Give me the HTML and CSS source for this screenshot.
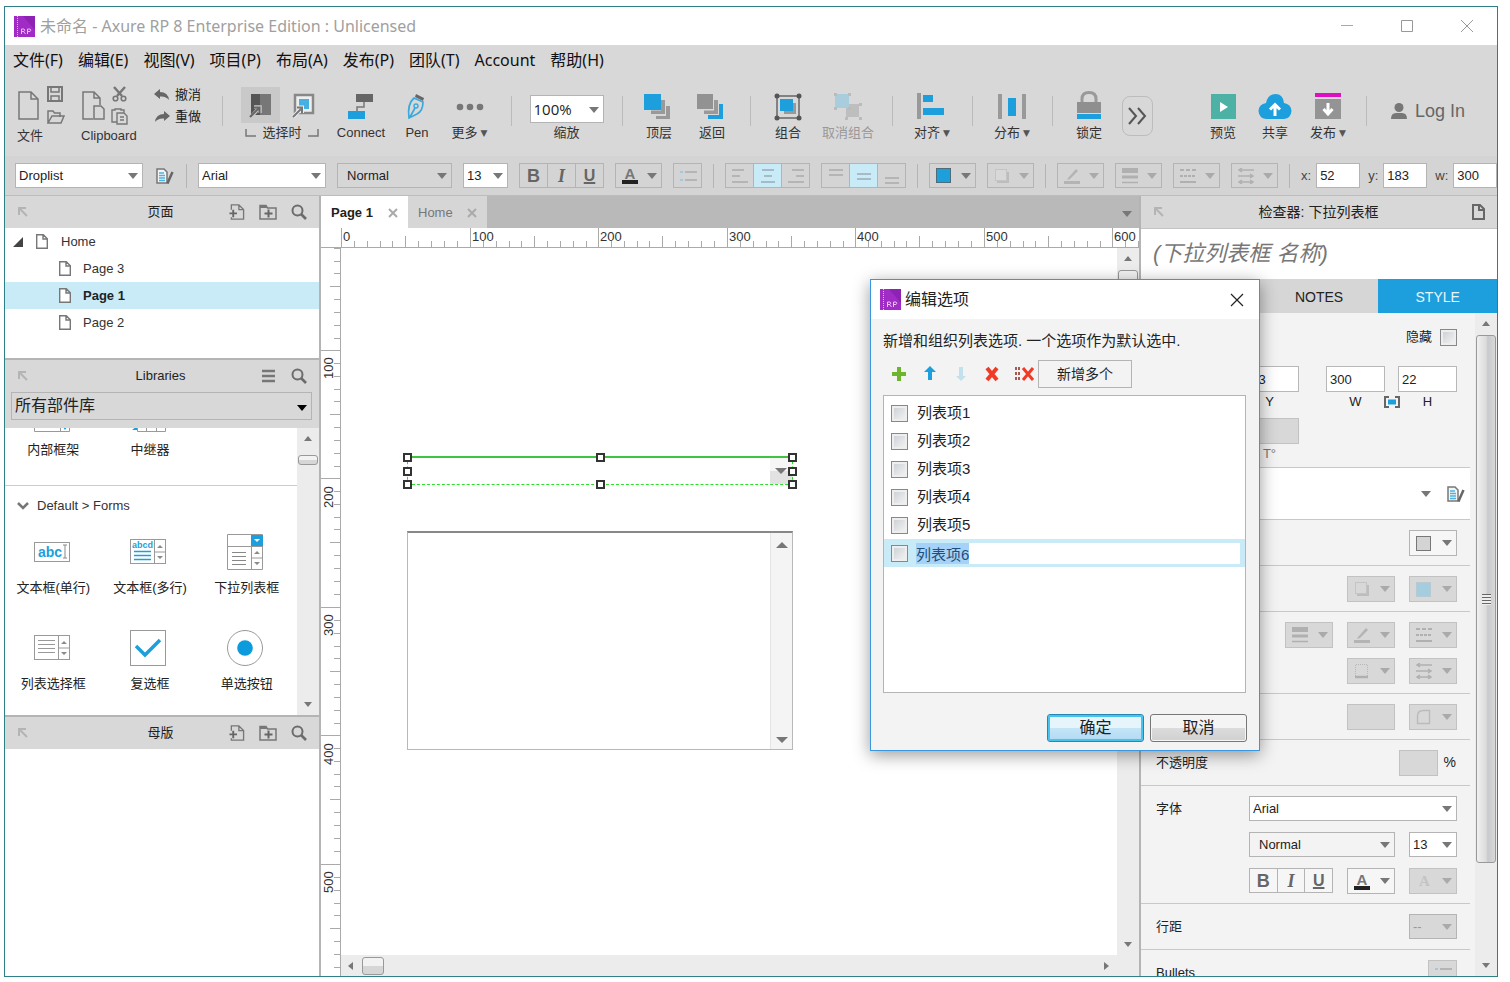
FILE: index.html
```html
<!DOCTYPE html>
<html lang="zh-CN">
<head>
<meta charset="utf-8">
<title>未命名 - Axure RP 8 Enterprise Edition : Unlicensed</title>
<link rel="stylesheet" href="styles.css">
</head>
<body>
<svg class="defs" aria-hidden="true">
  <symbol id="logo" viewBox="0 0 21 21"><rect width="21" height="21" fill="#a02bc5"/><path d="M9 0h12v14z" fill="#8d22b4"/><path d="M3.500 0v21" stroke="#e3b9f1" stroke-dasharray="1 1"/><path d="M7.500 18v-5h2.500q1.500 1.200 0 2.500h-2.500m2 0l2 2.500m2 0v-5h2.500q1.700 1.200 0 2.500h-2.500" fill="none" stroke="#e6c2f2"/></symbol>
  <symbol id="page" viewBox="0 0 12 15"><path d="M.7 .7h6.600l4 4v9.600H.7zM7 .7v4.300h4.300" fill="#fff" stroke="#777" stroke-width="1.400"/></symbol>
  <symbol id="dock" viewBox="0 0 10 10"><path d="M1 8V1h7M2 2l7 7" fill="none" stroke="#b4b4b4" stroke-width="2"/></symbol>
  <symbol id="addpage" viewBox="0 0 16 17"><path d="M2 6V1h8l5 5v10H2v-2M10 1v5h5" fill="none" stroke="#777" stroke-width="1.400"/><path d="M0 10h8M4 6v8" stroke="#666" stroke-width="2"/></symbol>
  <symbol id="addfolder" viewBox="0 0 18 16"><path d="M1 15V1.500h6L8.500 4H17v11z" fill="none" stroke="#777" stroke-width="1.500"/><path d="M1 2h6l1 2H1z" fill="#777"/><path d="M5.500 9.500h8M9.500 5.500v8" stroke="#666" stroke-width="2"/></symbol>
  <symbol id="search" viewBox="0 0 16 16"><circle cx="6.500" cy="6.500" r="5" fill="none" stroke="#6c6c6c" stroke-width="2"/><path d="M10 10l5 5" stroke="#6c6c6c" stroke-width="2.600"/></symbol>
  <symbol id="styleedit" viewBox="0 0 18 16"><path d="M1 1h7l3 3v11H1z" fill="#f5f5f5" stroke="#777" stroke-width="1.500"/><path d="M3 5h5M3 7.500h6M3 10h6M3 12.500h6" stroke="#4cb3e2" stroke-width="1.500"/><path d="M16.500 4l-4 9-1 2.500" stroke="#666" stroke-width="2.500"/></symbol>
  <symbol id="i-bullets" viewBox="0 0 18 14"><path d="M1 3h3M1 11h3" stroke="#9ccbe0" stroke-width="2"/><path d="M6 3h12M6 11h12" stroke="#b5b5b5" stroke-width="2"/></symbol>
  <symbol id="i-shadow" viewBox="0 0 16 16"><path d="M3 13v2h12V4h-2v9z" fill="#bdbdbd"/><rect x="1.500" y="1.500" width="11" height="11" fill="#d8d8d8" stroke="#c4c4c4"/></symbol>
  <symbol id="i-pencil" viewBox="0 0 16 16"><path d="M4 10L12 1l2 2-8 8-3 1z" fill="#b4b4b4"/><path d="M0 14.500h16" stroke="#b4b4b4" stroke-width="3"/></symbol>
  <symbol id="i-lines" viewBox="0 0 16 16"><path d="M0 2.500h16" stroke="#b0b0b0" stroke-width="5"/><path d="M0 9h16" stroke="#b0b0b0" stroke-width="3"/><path d="M0 14.500h16" stroke="#b0b0b0" stroke-width="1.500"/></symbol>
  <symbol id="i-dash" viewBox="0 0 16 16"><path d="M0 2h16" stroke="#b0b0b0" stroke-width="2" stroke-dasharray="4 2"/><path d="M0 8h16" stroke="#b0b0b0" stroke-width="2" stroke-dasharray="3 1"/><path d="M0 14h16" stroke="#b0b0b0" stroke-width="2"/></symbol>
  <symbol id="i-arrows" viewBox="0 0 16 16"><path d="M2 2h14M0 8h14M2 14h12M4 0L1 2l3 2M12 6l3 2-3 2M4 12l-3 2 3 2M12 12l3 2-3 2" stroke="#b0b0b0" stroke-width="1.400" fill="none"/></symbol>
  <symbol id="i-border" viewBox="0 0 16 16"><path d="M1.500 13V1.500h12V13" fill="none" stroke="#b8b8b8" stroke-dasharray="1 1"/><path d="M1 14h13" stroke="#b0b0b0" stroke-width="2.500"/></symbol>
  <symbol id="i-corner" viewBox="0 0 16 16"><path d="M1.500 14.500V7q0-5.500 6-5.500h6v13z" fill="none" stroke="#bbb" stroke-width="1.400"/></symbol>
  <symbol id="updn" viewBox="0 0 12 24"><path d="M0 12h12" stroke="#999"/><path d="M3 8h6l-3-3zM3 16h6l-3 3z" fill="#8a8a8a"/></symbol>
</svg>

<div class="window">
  <header class="titlebar">
    <svg class="s21"><use href="#logo"/></svg>
    <h1 class="title">未命名 - Axure RP 8 Enterprise Edition : Unlicensed</h1>
    <div class="winbtns">
      <button aria-label="最小化"><svg class="s14" viewBox="0 0 14 14"><path d="M1 6.500h12" stroke="#a8a8a8"/></svg></button>
      <button aria-label="最大化"><svg class="s14" viewBox="0 0 14 14"><path d="M1.500 1.500h11v11h-11z" fill="none" stroke="#999"/></svg></button>
      <button aria-label="关闭"><svg class="s14" viewBox="0 0 14 14"><path d="M1 1l12 12M13 1L1 13" stroke="#999"/></svg></button>
    </div>
  </header>
  <nav class="menubar">
    <button>文件(F)</button><button>编辑(E)</button><button>视图(V)</button><button>项目(P)</button><button>布局(A)</button><button>发布(P)</button><button>团队(T)</button><button>Account</button><button>帮助(H)</button>
  </nav>

  <div class="toolbar">
    <div class="duo">
      <div class="duo-icons">
        <svg class="big" viewBox="0 0 24 30"><path d="M2 1h12l7 7v20H2zM14 1v7h7" fill="none" stroke="#777" stroke-width="1.500"/></svg>
        <svg class="pair" viewBox="0 0 18 40"><path d="M1 1h14v14H1z" fill="none" stroke="#777" stroke-width="2"/><path d="M4 1v5h8V1M4 15v-5h8v5" fill="none" stroke="#777" stroke-width="1.500"/><path d="M1 37V25h5l1.500 2H13v4M1 37l4-7h12l-3 7z" fill="none" stroke="#777" stroke-width="1.500"/></svg>
      </div>
      <span>文件</span>
    </div>
    <div class="duo">
      <div class="duo-icons">
        <svg class="big" viewBox="0 0 24 30"><path d="M12 28H2V1h11l6 6v7M13 1v6h6" fill="none" stroke="#777" stroke-width="1.500"/><path d="M13 15h7l3 3v10H13z" fill="none" stroke="#777" stroke-width="1.500"/></svg>
        <svg class="pair" viewBox="0 0 18 40"><path d="M3 1l8 9M14 1L6 10" stroke="#777" stroke-width="2.500"/><circle cx="4.500" cy="12.500" r="2.300" fill="none" stroke="#777" stroke-width="1.600"/><circle cx="12.500" cy="12.500" r="2.300" fill="none" stroke="#777" stroke-width="1.600"/><path d="M6 36H1V24h3v-1h6v1h3v3M6 27h7l3 3v8H6zM9 31h4M9 34h4" fill="none" stroke="#777" stroke-width="1.400"/></svg>
      </div>
      <span>Clipboard</span>
    </div>
    <div class="undo">
      <button><svg class="s16" viewBox="0 0 16 16"><path d="M0 7l6-5v3q8 0 9 8-3-4-9-3.500V12z" fill="#666"/></svg>撤消</button>
      <button><svg class="s16" viewBox="0 0 16 16"><path d="M16 7l-6-5v3Q2 5 1 13q3-4 9-3.500V12z" fill="#666"/></svg>重做</button>
    </div>
    <i class="sep"></i>
    <div class="selmode">
      <div class="selmode-icons">
        <button class="on" aria-label="相交选择"><svg viewBox="0 0 24 26"><path d="M2 2h9v21H2z" fill="#555"/><path d="M11 2h11v21H11z" fill="#777"/><path d="M2 25l9-10M5 15h6v6" fill="none" stroke="#c9c9c9" stroke-width="3.500"/><path d="M1 25l9-9M5 15.500h5.500V21" fill="none" stroke="#666" stroke-width="2"/></svg></button>
        <button aria-label="包含选择"><svg viewBox="0 0 24 26"><path d="M3 3h18v18H3z" fill="#eee" stroke="#888" stroke-width="2.500"/><path d="M7 7h10v10H7z" fill="#45b0e2"/><path d="M1 25l9-9M5 15.500h5V21" fill="none" stroke="#eee" stroke-width="4"/><path d="M1 25l8-8M5 15.500h5V21" fill="none" stroke="#777" stroke-width="2"/></svg></button>
      </div>
      <div class="selmode-label"><svg viewBox="0 0 12 9"><path d="M1 0v7h10" fill="none" stroke="#777" stroke-width="1.500"/></svg>选择时<svg viewBox="0 0 12 9"><path d="M11 0v7H1" fill="none" stroke="#777" stroke-width="1.500"/></svg></div>
    </div>
    <button class="tool"><svg viewBox="0 0 30 30"><path d="M10 1h17v8H10z" fill="#666"/><path d="M18 9v5h-7v4" fill="none" stroke="#777" stroke-width="1.500"/><path d="M2 18h17v8H2z" fill="#1c9fdc"/></svg>Connect</button>
    <button class="tool"><svg viewBox="0 0 30 30"><path d="M14 1l8 4-1 3-8-4z" fill="#666"/><path d="M12 5l9 4q0 9-6 12l-8 4Q5 11 12 5zM8 24l5-9" fill="none" stroke="#3aa9dd" stroke-width="1.700"/><circle cx="14" cy="13" r="2" fill="none" stroke="#3aa9dd" stroke-width="1.400"/></svg>Pen</button>
    <button class="tool"><svg viewBox="0 0 30 30"><g fill="#777"><circle cx="5" cy="14" r="3.300"/><circle cx="15" cy="14" r="3.300"/><circle cx="25" cy="14" r="3.300"/></g></svg><span class="drop">更多</span></button>
    <i class="sep"></i>
    <div class="tool"><span class="sel zoom"><select aria-labelledby="zoomlab"><option>100%</option></select></span><span id="zoomlab">缩放</span></div>
    <i class="sep"></i>
    <button class="tool"><svg viewBox="0 0 30 30"><path d="M12 26v-3h10V13h4v13zM7 21v-3.500h10V7h4v14z" fill="#999"/><path d="M0 1h17v16H0z" fill="#1c9fdc"/></svg>顶层</button>
    <button class="tool"><svg viewBox="0 0 30 30"><path d="M11 26v-4h11V11h4v15z" fill="#1c9fdc"/><path d="M7 21v-3.500h10V7h4v14z" fill="#999"/><path d="M0 1h16v15H0z" fill="#929292"/></svg>返回</button>
    <i class="sep"></i>
    <button class="tool"><svg viewBox="0 0 30 30"><path d="M4 3h22v22H4z" fill="none" stroke="#666" stroke-width="1.500"/><path d="M11 10h12v11H11z" fill="#999"/><path d="M7 6h13v12H7z" fill="#1c9fdc"/><g fill="#555"><circle cx="4" cy="3" r="2.500"/><circle cx="26" cy="3" r="2.500"/><circle cx="4" cy="25" r="2.500"/><circle cx="26" cy="25" r="2.500"/></g></svg>组合</button>
    <button class="tool off"><svg viewBox="0 0 30 30"><path d="M13 11h13v13H13z" fill="#bebebe"/><path d="M2 1h14v14H2z" fill="#a9cddd"/><path d="M1 0h3v3H1zM15 0h3v3h-3zM1 14h3v3H1zM15 14h3v3h-3zM26 10h3v3h-3zM12 24h3v3h-3zM26 24h3v3h-3z" fill="#bbb"/></svg>取消组合</button>
    <i class="sep"></i>
    <button class="tool"><svg viewBox="0 0 30 30"><path d="M0 0h4v26H0z" fill="#999"/><path d="M6 2h10v7H6zM6 15h21v7H6z" fill="#1c9fdc"/></svg><span class="drop">对齐</span></button>
    <i class="sep"></i>
    <button class="tool"><svg viewBox="0 0 30 30"><path d="M1 1h4v25H1zM25 1h4v25h-4z" fill="#999"/><path d="M11 5h8v18h-8z" fill="#1c9fdc"/></svg><span class="drop">分布</span></button>
    <i class="sep"></i>
    <button class="tool"><svg viewBox="0 0 30 30"><path d="M8 9V6q0-6.500 7-6.500T22 6v3" fill="none" stroke="#999" stroke-width="3"/><path d="M3 9h24v11H3z" fill="#8f8f8f"/><path d="M3 21h24v5H3z" fill="#1c9fdc"/></svg>锁定</button>
    <button class="expand" aria-label="更多工具"><svg viewBox="0 0 20 18"><path d="M2 1l7 8-7 8M11 1l7 8-7 8" fill="none" stroke="#555" stroke-width="2"/></svg></button>
    <i></i>
    <button class="tool"><svg viewBox="0 0 30 30"><path d="M3 1h25v25H3z" fill="#4db1a5"/><path d="M12 9l8 5-8 5z" fill="#fff"/></svg>预览</button>
    <button class="tool"><svg class="wide" viewBox="0 0 34 30"><path d="M8 26q-7-1-7.500-8Q1 11 8 10q2-9 9.500-9Q25 1 26 10q7 1 7.500 8-.5 7-7.500 8z" fill="#1c9fdc"/><path d="M17 23V12M12 16.500l5-5 5 5" fill="none" stroke="#fff" stroke-width="3"/></svg>共享</button>
    <button class="tool"><svg viewBox="0 0 30 30"><path d="M2 0h26v4H2z" fill="#dd0fc0"/><path d="M2 6h26v20H2z" fill="#949494"/><path d="M15 10v10M10.500 16l4.500 5 4.500-5" fill="none" stroke="#fff" stroke-width="3"/></svg><span class="drop">发布</span></button>
    <i class="sep"></i>
    <button class="login"><svg class="s16" viewBox="0 0 16 16"><circle cx="8" cy="4.500" r="4.500" fill="#777"/><path d="M0 16q0-6 5-6h6q5 0 5 6z" fill="#777"/></svg>Log In</button>
  </div>

  <div class="stylebar">
    <span class="sel w128"><select aria-label="部件样式"><option>Droplist</option></select></span>
    <button class="bare" aria-label="编辑样式"><svg class="i18"><use href="#styleedit"/></svg></button>
    <i class="vsep"></i>
    <span class="sel w128"><select aria-label="字体"><option>Arial</option></select></span>
    <span class="sel w115 grey"><select aria-label="字形"><option>Normal</option></select></span>
    <span class="sel w45"><select aria-label="字号"><option>13</option></select></span>
    <span class="seg"><button class="b">B</button><button class="it">I</button><button class="u">U</button></span>
    <button class="dd" aria-label="字体颜色"><span class="fa">A</span></button>
    <button class="sq" aria-label="项目符号"><svg class="i18"><use href="#i-bullets"/></svg></button>
    <i class="vsep"></i>
    <span class="seg">
      <button aria-label="左对齐"><svg class="i16" viewBox="0 0 16 16"><path d="M0 2h12M0 8h8M0 14h16" stroke="#b5b5b5" stroke-width="2"/></svg></button>
      <button class="act" aria-label="居中"><svg class="i16" viewBox="0 0 16 16"><path d="M2 2h12M4 8h8M1 14h14" stroke="#a5bcc6" stroke-width="2"/></svg></button>
      <button aria-label="右对齐"><svg class="i16" viewBox="0 0 16 16"><path d="M4 2h12M8 8h8M0 14h16" stroke="#b5b5b5" stroke-width="2"/></svg></button>
    </span>
    <span class="seg">
      <button aria-label="顶部对齐"><svg class="i16" viewBox="0 0 16 16"><path d="M1 2h14M1 7h14" stroke="#b5b5b5" stroke-width="2"/></svg></button>
      <button class="act" aria-label="垂直居中"><svg class="i16" viewBox="0 0 16 16"><path d="M1 6h14M1 11h14" stroke="#a5bcc6" stroke-width="2"/></svg></button>
      <button aria-label="底部对齐"><svg class="i16" viewBox="0 0 16 16"><path d="M1 10h14M1 15h14" stroke="#b5b5b5" stroke-width="2"/></svg></button>
    </span>
    <i class="vsep"></i>
    <button class="dd" aria-label="填充颜色"><i class="swatch blue"></i></button>
    <button class="dd dis" aria-label="阴影"><svg class="i16"><use href="#i-shadow"/></svg></button>
    <i class="vsep"></i>
    <button class="dd dis" aria-label="线条颜色"><svg class="i16"><use href="#i-pencil"/></svg></button>
    <button class="dd dis" aria-label="线宽"><svg class="i16"><use href="#i-lines"/></svg></button>
    <button class="dd dis" aria-label="线型"><svg class="i16"><use href="#i-dash"/></svg></button>
    <button class="dd dis" aria-label="箭头"><svg class="i16"><use href="#i-arrows"/></svg></button>
    <i class="vsep"></i>
    <label class="coord">x: <input value="52"></label>
    <label class="coord">y: <input value="183"></label>
    <label class="coord">w: <input value="300"></label>
  </div>

  <main class="main">
    <aside class="left">
      <div class="phead"><svg class="s10"><use href="#dock"/></svg><h2>页面</h2><span class="pact"><button aria-label="添加页面"><svg class="i16"><use href="#addpage"/></svg></button><button aria-label="添加文件夹"><svg class="i18"><use href="#addfolder"/></svg></button><button aria-label="搜索"><svg class="i16"><use href="#search"/></svg></button></span></div>
      <ul class="tree">
        <li class="root"><svg class="s10" viewBox="0 0 10 10"><path d="M10 0v10H0z" fill="#444"/></svg><svg class="pg"><use href="#page"/></svg>Home</li>
        <li><svg class="pg"><use href="#page"/></svg>Page 3</li>
        <li class="cur"><svg class="pg"><use href="#page"/></svg>Page 1</li>
        <li><svg class="pg"><use href="#page"/></svg>Page 2</li>
      </ul>
      <div class="phead top"><svg class="s10"><use href="#dock"/></svg><h2>Libraries</h2><span class="pact"><button aria-label="菜单"><svg class="i16" viewBox="0 0 16 16"><path d="M1 3h13M1 8h13M1 13h13" stroke="#777" stroke-width="2.400"/></svg></button><button aria-label="搜索"><svg class="i16"><use href="#search"/></svg></button></span></div>
      <div class="libsel"><span class="sel black"><select aria-label="部件库"><option>所有部件库</option></select></span></div>
      <div class="lib">
        <div class="liblist">
          <div class="tiles first">
            <div class="tile"><svg viewBox="0 0 36 36"><path d="M.5 8V35.500h35V8M26.500 10v25" fill="none" stroke="#999"/><path d="M29 31h4l-2 3z" fill="#1c9fdc"/></svg>内部框架</div>
            <div class="tile"><svg viewBox="0 0 36 36"><path d="M7.500 8v27.500h28V8M16.500 10v25M26.500 10v25" fill="none" stroke="#999"/><path d="M2 34l5-4v4z" fill="#1c9fdc"/></svg>中继器</div>
          </div>
          <div class="libhead"><svg viewBox="0 0 12 8"><path d="M1 1l5 5 5-5" fill="none" stroke="#777" stroke-width="2.500"/></svg>Default &gt; Forms</div>
          <div class="tiles">
            <div class="tile"><svg viewBox="0 0 36 36"><rect x=".5" y="8.500" width="35" height="19" fill="#fff" stroke="#999"/><text x="4" y="23" class="abc">abc</text><path d="M29 11h4M31 11v13M29 24h4" stroke="#888"/></svg>文本框(单行)</div>
            <div class="tile"><svg viewBox="0 0 36 36"><rect x=".5" y="5.500" width="35" height="24" fill="#fff" stroke="#999"/><path d="M24.500 6v23" stroke="#999"/><text x="2" y="14" class="abcd">abcd</text><path d="M4 17.500h17M4 21.500h17M4 25.500h17" stroke="#1c9fdc" stroke-width="1.500"/><use href="#updn" x="24" y="6" width="12" height="24"/></svg>文本框(多行)</div>
            <div class="tile"><svg viewBox="0 0 36 36"><path d="M.5 .5h35v35H.5zM.5 12.500h35M24.500 12v24" fill="#fff" stroke="#999"/><path d="M24 1h12v11H24z" fill="#1c9fdc"/><path d="M27 5h6l-3 3z" fill="#fff"/><path d="M5 18.500h14M5 22.500h14M5 26.500h14M5 30.500h14" stroke="#888"/><use href="#updn" x="24" y="12" width="12" height="24"/></svg>下拉列表框</div>
            <div class="tile"><svg viewBox="0 0 36 36"><rect x=".5" y="5.500" width="35" height="24" fill="#fff" stroke="#999"/><path d="M24.500 6v23" stroke="#999"/><path d="M4 10.500h17M4 14.500h17M4 18.500h17M4 22.500h17" stroke="#999"/><use href="#updn" x="24" y="6" width="12" height="24"/></svg>列表选择框</div>
            <div class="tile"><svg viewBox="0 0 36 36"><rect x=".5" y=".5" width="35" height="35" fill="#fff" stroke="#999"/><path d="M6 16l9 9L30 10" fill="none" stroke="#1c9fdc" stroke-width="3.500"/></svg>复选框</div>
            <div class="tile"><svg viewBox="0 0 36 36"><circle cx="18" cy="18" r="17.500" fill="#fff" stroke="#999"/><circle cx="18" cy="18" r="7.800" fill="#0c9bdd"/></svg>单选按钮</div>
          </div>
        </div>
        <div class="vbar"><i class="up"></i><i class="thumb flat"></i><i class="fill"></i><i class="down"></i></div>
      </div>
      <div class="phead top"><svg class="s10"><use href="#dock"/></svg><h2>母版</h2><span class="pact"><button aria-label="添加母版"><svg class="i16"><use href="#addpage"/></svg></button><button aria-label="添加文件夹"><svg class="i18"><use href="#addfolder"/></svg></button><button aria-label="搜索"><svg class="i16"><use href="#search"/></svg></button></span></div>
      <div class="masters"></div>
    </aside>

    <section class="center">
      <div class="tabs">
        <button class="tab cur">Page 1<svg viewBox="0 0 10 10"><path d="M1 1l8 8M9 1L1 9" stroke="#aaa" stroke-width="2"/></svg></button>
        <button class="tab">Home<svg viewBox="0 0 10 10"><path d="M1 1l8 8M9 1L1 9" stroke="#aaa" stroke-width="2"/></svg></button>
        <button class="tabmenu" aria-label="标签列表"></button>
      </div>
      <svg class="hruler" aria-hidden="true">
        <defs><path id="ht" d="M.5 0v19M13.500 13v6M26.500 13v6M39.500 13v6M51.500 13v6M64.500 8v11M77.500 13v6M90.500 13v6M103.500 13v6M116.500 13v6"/></defs>
        <g fill="none" stroke="#aaa"><use href="#ht" x="20"/><use href="#ht" x="149"/><use href="#ht" x="277"/><use href="#ht" x="406"/><use href="#ht" x="534"/><use href="#ht" x="663"/><use href="#ht" x="791"/></g>
        <text x="22" y="13">0</text><text x="151" y="13">100</text><text x="279" y="13">200</text><text x="408" y="13">300</text><text x="536" y="13">400</text><text x="665" y="13">500</text><text x="793" y="13">600</text>
      </svg>
      <div class="work">
        <svg class="vruler" aria-hidden="true">
          <defs><path id="vt" d="M0 .5h19M13 13.500h6M13 26.500h6M13 39.500h6M13 51.500h6M9 64.500h10M13 77.500h6M13 90.500h6M13 103.500h6M13 116.500h6"/></defs>
          <g fill="none" stroke="#aaa"><use href="#vt" y="-26"/><use href="#vt" y="102"/><use href="#vt" y="230"/><use href="#vt" y="359"/><use href="#vt" y="487"/><use href="#vt" y="616"/></g>
          <text transform="translate(12 131) rotate(-90)">100</text><text transform="translate(12 260) rotate(-90)">200</text><text transform="translate(12 388) rotate(-90)">300</text><text transform="translate(12 517) rotate(-90)">400</text><text transform="translate(12 645) rotate(-90)">500</text>
        </svg>
        <div class="canvas">
          <div class="w-drop"><i class="arrow"></i>
            <b class="h nw"></b><b class="h n"></b><b class="h ne"></b><b class="h w"></b><b class="h e"></b><b class="h sw"></b><b class="h s"></b><b class="h se"></b>
          </div>
          <div class="w-list"><div class="w-bar"><i class="up"></i><i class="down"></i></div></div>
        </div>
        <div class="vbar"><i class="up"></i><i class="thumb"></i><i class="fill"></i><i class="down"></i></div>
        <div class="hbar"><i class="lt"></i><i class="thumb"></i><i class="fill"></i><i class="rt"></i></div>
      </div>
    </section>

    <aside class="right">
      <div class="phead"><svg class="s10"><use href="#dock"/></svg><h2 class="insp">检查器: 下拉列表框</h2><span class="pact"><svg class="i16" viewBox="0 0 16 16"><path d="M2 1h7l4 4v10H2zM8 1v5h5" fill="none" stroke="#666" stroke-width="2"/></svg></span></div>
      <input class="wname" aria-label="部件名称" placeholder="(下拉列表框 名称)">
      <div class="itabs"><button aria-label="属性"></button><button>NOTES</button><button class="cur">STYLE</button></div>
      <div class="ibody">
        <div class="props">
          <section class="general">
            <label class="hide">隐藏<input type="checkbox"></label>
            <div class="geo">
              <input id="gx" value="52"><i></i><input id="gy" value="183"><i></i><input id="gw" value="300"><i></i><input id="gh" value="22">
              <label for="gx">X</label><i></i><label for="gy">Y</label><i></i><label for="gw">W</label><svg viewBox="0 0 16 12"><path d="M5 1H1v10h4M11 1h4v10h-4" fill="none" stroke="#666" stroke-width="2"/><path d="M4 3.500h8v5H4z" fill="#1c9fdc"/></svg><label for="gh">H</label>
            </div>
            <div class="geo dimmed">
              <input id="gr" disabled><i></i><input id="gt" disabled><i></i><i></i><i></i><i></i>
              <label for="gr">R°</label><i></i><label for="gt">T°</label>
            </div>
          </section>
          <section class="stylepick"><i class="tri"></i><button class="bare" aria-label="编辑样式"><svg class="i18"><use href="#styleedit"/></svg></button></section>
          <section><span>填充</span><button class="dd lite" aria-label="填充"><i class="swatch"></i></button></section>
          <section><span>阴影</span><button class="dd fade" aria-label="外部阴影"><svg class="i16"><use href="#i-shadow"/></svg></button><button class="dd fade" aria-label="内部阴影"><i class="swatch pale"></i></button></section>
          <section class="two"><span>边框</span><div class="ctl"><div><button class="dd fade" aria-label="边框宽度"><svg class="i16"><use href="#i-lines"/></svg></button><button class="dd fade" aria-label="边框颜色"><svg class="i16"><use href="#i-pencil"/></svg></button><button class="dd fade" aria-label="边框样式"><svg class="i16"><use href="#i-dash"/></svg></button></div><div><button class="dd fade" aria-label="边框可见"><svg class="i16"><use href="#i-border"/></svg></button><button class="dd fade" aria-label="箭头样式"><svg class="i16"><use href="#i-arrows"/></svg></button></div></div></section>
          <section><span></span><input class="fadein" aria-label="圆角半径" disabled><button class="dd fade" aria-label="圆角"><svg class="i16"><use href="#i-corner"/></svg></button></section>
          <section><label for="op">不透明度</label><span class="pct"><input class="fadein op" id="op" disabled>%</span></section>
          <section class="two"><span>字体</span><div class="ctl">
            <div><span class="sel grow"><select aria-label="字体名称"><option>Arial</option></select></span></div>
            <div><span class="sel grow light"><select aria-label="字体样式"><option>Normal</option></select></span><span class="sel w48"><select aria-label="字体大小"><option>13</option></select></span></div>
            <div><span class="seg lite"><button class="b">B</button><button class="it">I</button><button class="u">U</button></span><button class="dd lite" aria-label="文字颜色"><span class="fa">A</span></button><button class="dd fade" aria-label="文字阴影"><span class="fs">A</span></button></div>
          </div></section>
          <section><span>行距</span><span class="sel w48 off"><select aria-label="行距" disabled><option>--</option></select></span></section>
          <section class="last"><span>Bullets</span><button class="sq fade" aria-label="符号"><svg class="i18"><use href="#i-bullets"/></svg></button></section>
        </div>
        <div class="vbar"><i class="up"></i><i class="thumb long"></i><i class="fill"></i><i class="down"></i></div>
      </div>
    </aside>
  </main>

  <div class="dialog" role="dialog" aria-labelledby="dt">
    <div class="dhead"><svg class="s21"><use href="#logo"/></svg><h2 id="dt">编辑选项</h2><button aria-label="关闭"><svg class="s14" viewBox="0 0 14 14"><path d="M1 1l12 12M13 1L1 13" stroke="#222" stroke-width="1.200"/></svg></button></div>
    <p>新增和组织列表选项. 一个选项作为默认选中.</p>
    <div class="dtools">
      <button aria-label="新增"><svg class="i16" viewBox="0 0 16 16"><path d="M8 1v14M1 8h14" stroke="#6cb52d" stroke-width="4"/></svg></button>
      <button aria-label="上移"><svg class="i16" viewBox="0 0 16 16"><path d="M8 0l6 6h-4v8H6V6H2z" fill="#1c9fdc"/></svg></button>
      <button aria-label="下移"><svg class="i16" viewBox="0 0 16 16"><path d="M8 15l5-5h-3V1H6v9H3z" fill="#c3e0ed"/></svg></button>
      <button aria-label="删除"><svg class="i16" viewBox="0 0 16 16"><path d="M3 2l10 12M13 2L3 14" stroke="#f03a26" stroke-width="4"/></svg></button>
      <button aria-label="全部删除"><svg class="i20" viewBox="0 0 20 16"><path d="M1 1v14M4 1v14" stroke="#a8584f" stroke-width="2" stroke-dasharray="3 2"/><path d="M8 2l10 12M18 2L8 14" stroke="#f03a26" stroke-width="3"/></svg></button>
      <button class="many">新增多个</button>
    </div>
    <ul class="opts">
      <li><label><input type="checkbox">列表项1</label></li>
      <li><label><input type="checkbox">列表项2</label></li>
      <li><label><input type="checkbox">列表项3</label></li>
      <li><label><input type="checkbox">列表项4</label></li>
      <li><label><input type="checkbox">列表项5</label></li>
      <li class="edit"><input type="checkbox" aria-label="默认选中"><input type="text" id="edit" aria-label="选项名称" value="列表项6"></li>
    </ul>
    <div class="dfoot"><button class="ok">确定</button><button>取消</button></div>
  </div>
</div>
<script src="app.js"></script>
</body>
</html>
```
FILE: app.js
```js
// The option being edited opens with its whole text selected.
var edit = document.getElementById("edit");
edit.focus();
edit.select();
```
FILE: styles.css
```css
* { box-sizing: border-box; }
body { margin: 0; padding: 6px 12px 5px 4px; height: 100vh; background: #fff; overflow: hidden; color: #333; font: 13px/20px "Liberation Sans", "Noto Sans CJK SC", sans-serif; }
button, input, select { font: inherit; color: inherit; margin: 0; padding: 0; border: 0; background: none; border-radius: 0; outline: 0; }
h1, h2, p, ul { margin: 0; padding: 0; font-weight: normal; font-size: inherit; list-style: none; }
svg { display: block; flex: none; }
.defs { position: absolute; width: 0; height: 0; }
.s10 { width: 10px; height: 10px; }
.s14 { width: 14px; height: 14px; }
.s16, .i16 { width: 16px; height: 16px; }
.i18 { width: 18px; height: 16px; }
.i20 { width: 20px; height: 16px; }
.s21 { width: 21px; height: 21px; }

.window { position: relative; height: 100%; display: flex; flex-direction: column; border: 1px solid #2f7f88; background: #d8d8d8; overflow: hidden; }
.titlebar { flex: none; height: 38px; display: flex; align-items: center; gap: 5px; padding-left: 9px; background: #fff; }
.title { font: 16px/24px "Noto Sans", "Noto Sans CJK SC", sans-serif; color: #a0a0a0; }
.winbtns { margin-left: auto; display: flex; }
.winbtns button { width: 60px; display: grid; place-items: center; }
.menubar { flex: none; height: 30px; display: flex; align-items: center; gap: 15px; padding-left: 8px; font: 16px/22px "Noto Sans", "Noto Sans CJK SC", sans-serif; color: #111; }

.toolbar { flex: none; height: 81px; padding-left: 12px; display: grid; grid-template-columns: 64px 73px 57px 22px 94px 68px 44px 61px 22px 89px 22px 52px 54px 22px 54px 66px 22px 58px 22px 58px 22px 52px 44px 1fr 52px 52px 54px 22px 120px; align-items: start; }
.sep { justify-self: center; margin-top: 21px; width: 1px; height: 30px; background: #bbb; }
.tool { justify-self: center; margin-top: 18px; display: flex; flex-direction: column; align-items: center; white-space: nowrap; }
.tool > svg { width: 30px; height: 30px; overflow: visible; }
.tool > svg.wide { width: 34px; }
.off { color: #999; }
.drop::after { content: "▼"; font: 9px/12px "DejaVu Sans", sans-serif; margin-left: 3px; vertical-align: 1px; color: #555; }
.duo { margin-top: 11px; }
.duo-icons { display: flex; align-items: center; gap: 6px; }
.big { width: 24px; height: 30px; }
.pair { width: 18px; height: 40px; }
.undo { margin-top: 10px; display: flex; flex-direction: column; gap: 2px; color: #222; }
.undo button { display: flex; align-items: center; gap: 5px; white-space: nowrap; }
.selmode { justify-self: center; margin-top: 12px; padding-left: 4px; }
.selmode-icons { display: flex; gap: 4px; }
.selmode-icons button { width: 39px; height: 36px; display: grid; place-items: center; }
.selmode-icons .on { background: #c9c9c9; }
.selmode-icons svg { width: 24px; height: 26px; }
.selmode-label { display: flex; align-items: center; justify-content: center; gap: 5px; }
.selmode-label svg { width: 12px; height: 9px; }
.expand { justify-self: center; margin-top: 21px; width: 31px; height: 40px; border: 1px solid #bcbcbc; border-radius: 8px; display: grid; place-items: center; }
.expand svg { width: 20px; height: 18px; }
.login { display: flex; align-items: center; gap: 8px; margin: 26px 0 0 14px; font-size: 18px; color: #666; }

.sel { position: relative; flex: none; display: inline-flex; height: 25px; background: #fff; border: 1px solid #b4b4b4; color: #222; }
.sel select { appearance: none; width: 100%; padding: 0 3px; }
.sel::after, .dd::after, .tri, .tabmenu::after { content: ""; border: 5px solid transparent; border-top: 6px solid #777; border-bottom: 0; }
.sel::after { position: absolute; right: 4px; top: 9px; pointer-events: none; }
.zoom { width: 74px; height: 28px; margin: 2px 0 0; font: 15px/20px "Open Sans", sans-serif; }
.zoom::after { top: 11px; }
.w128 { width: 128px; }
.w115 { width: 115px; }
.w48 { width: 48px; }
.w45 { width: 45px; }
.grey { background: #d6d6d6; }
.light { background: #f3f3f3; }
.grey select, .light select { padding-left: 9px; }
.black::after { border-top-color: #000; }
.sel.off { background: #d8d8d8; color: #999; }
.sel.off::after { border-top-color: #aaa; }
.sel.off select { opacity: 1; }

.stylebar { flex: none; height: 40px; display: flex; align-items: center; gap: 11px; padding-left: 10px; background: #d4d4d4; border-bottom: 1px solid #bcbcbc; overflow: hidden; }
.stylebar > * { flex: none; }
.bare { width: 21px; display: grid; place-items: center; }
.vsep { width: 1px; height: 24px; background: #b4b4b4; }
.seg { display: inline-flex; width: 85px; height: 25px; border: 1px solid #b4b4b4; }
.seg button { flex: 1; display: grid; place-items: center; color: #666; font-size: 18px; }
.seg button + button { border-left: 1px solid #b4b4b4; }
.seg .b { font-weight: bold; }
.seg .it { font-family: "Liberation Serif", serif; font-style: italic; font-weight: bold; }
.seg .u { text-decoration: underline; text-decoration-thickness: 2px; font-size: 16px; font-weight: bold; }
.seg .act { background: #c9eaf7; }
.dd { flex: none; width: 47px; height: 25px; border: 1px solid #b4b4b4; display: flex; align-items: center; justify-content: space-between; padding: 0 4px 0 6px; }
.dis::after, .fade::after { border-top-color: #aaa; }
.sq { flex: none; width: 29px; height: 25px; border: 1px solid #b4b4b4; display: grid; place-items: center; }
.lite { background: #f6f6f6; }
.fade { background: #d8d8d8; border-color: #c2c2c2; }
.fa { width: 16px; height: 17px; border-bottom: 4px solid #222; font: bold 15px/13px "Liberation Sans", sans-serif; color: #777; text-align: center; }
.fs { padding-left: 3px; font: bold 15px/20px "Liberation Serif", serif; color: #c4c4c4; }
.swatch { width: 15px; height: 15px; border: 1px solid #777; background: #d4d4d4; }
.swatch.blue { background: #1c9fdc; border-color: #4d6d7b; }
.swatch.pale { background: #a5cde0; border-color: #b9c9d1; }
.coord { display: flex; align-items: center; gap: 5px; margin-right: -3px; color: #444; }
.coord input { width: 44px; height: 25px; border: 1px solid #b4b4b4; background: #fff; padding-left: 3px; color: #222; }

.main { flex: 1; min-height: 0; display: flex; }
.left { flex: none; width: 316px; display: flex; flex-direction: column; border-right: 2px solid #b4b4b4; background: #fff; }
.phead { flex: none; height: 32px; display: grid; grid-template-columns: 74px 1fr 78px; align-items: center; padding: 0 12px 0 13px; background: #d8d8d8; color: #222; }
.phead h2 { text-align: center; }
.insp { white-space: nowrap; }
.phead.top { height: 34px; border-top: 2px solid #b4b4b4; }
.pact { display: flex; justify-content: flex-end; align-items: center; gap: 14px; }
.tree { flex: none; height: 130px; }
.tree li { height: 27px; display: flex; align-items: center; gap: 12px; padding-left: 54px; }
.tree .root { padding-left: 8px; gap: 13px; }
.tree .cur { background: #c9eaf7; font-weight: bold; color: #222; }
.pg { width: 12px; height: 15px; }
.libsel { flex: none; background: #d8d8d8; padding: 0 7px 8px 6px; height: 36px; }
.libsel .sel { width: 100%; height: 28px; background: #d8d8d8; font-size: 16px; }
.libsel .sel::after { top: 12px; }
.lib { flex: none; height: 287px; display: flex; }
.liblist { flex: 1; overflow: hidden; padding-right: 2px; }
.tiles { display: grid; grid-template-columns: repeat(3, 1fr); }
.tiles.first { margin: -41px -2px 0 0; padding: 0 2px 2px 0; border-bottom: 1px solid #ccc; }
.tile { height: 96px; padding-top: 9px; display: flex; flex-direction: column; align-items: center; gap: 8px; color: #222; }
.tile svg { width: 36px; height: 36px; margin-right: 3px; }
.abc { font: bold 14px "Liberation Sans", sans-serif; fill: #1c9fdc; }
.abcd { font: bold 9px "Liberation Sans", sans-serif; fill: #1c9fdc; }
.libhead { height: 39px; display: flex; align-items: center; gap: 8px; padding-left: 12px; }
.libhead svg { width: 12px; height: 8px; }
.masters { flex: 1; }

.vbar { flex: none; width: 22px; background: #ececec; display: flex; flex-direction: column; align-items: center; padding: 8px 0; }
.hbar { background: #ececec; display: flex; align-items: center; padding: 0 8px 0 7px; }
.up, .down { border: 4px solid transparent; }
.up { border-top: 0; border-bottom: 5px solid #777; }
.down { border-bottom: 0; border-top: 5px solid #777; }
.lt { border: 4px solid transparent; border-left: 0; border-right: 5px solid #777; }
.rt { border: 4px solid transparent; border-right: 0; border-left: 5px solid #777; }
.fill { flex: 1; }
.thumb { width: 20px; height: 18px; border: 1px solid #999; border-radius: 3px; background: linear-gradient(#f2f2f2 50%, #d6d6d6 50%); }
.vbar .thumb { margin-top: 9px; }
.hbar .thumb { margin-left: 9px; width: 22px; }
.vbar .flat { height: 10px; margin-top: 14px; }
.vbar .long { height: 528px; background: linear-gradient(90deg, #f0f0f0, #dcdcdc 50%, #c8c9cc 60%, #d8d8d8); display: grid; place-items: center; }
.long::after { content: ""; width: 9px; height: 11px; background: repeating-linear-gradient(#666 0 1px, #eee 1px 3px); }

.center { flex: 1; min-width: 0; display: flex; flex-direction: column; background: #fff; }
.tabs { flex: none; height: 32px; display: flex; background: #b9b9b9; }
.tab { display: flex; align-items: center; justify-content: space-between; width: 79px; padding: 2px 10px 0; background: #d6d6d6; color: #777; }
.tab.cur { width: 87px; background: #fff; color: #222; font-weight: bold; }
.tab svg { width: 10px; height: 10px; }
.tabmenu { margin-left: auto; width: 24px; display: grid; place-items: center; padding-top: 4px; }
.hruler { width: 100%; height: 20px; border-bottom: 1px solid #aaa; font-size: 13px; fill: #333; }
.work { flex: 1; min-height: 0; display: grid; grid-template-columns: 20px 1fr 22px; grid-template-rows: 1fr 21px; }
.vruler { grid-row: span 2; width: 20px; height: 100%; border-right: 1px solid #aaa; font-size: 13px; fill: #333; }
.hruler g, .vruler g { shape-rendering: crispEdges; }
.canvas { position: relative; overflow: hidden; }
.hbar { grid-column: 2 / 4; padding-right: 30px; }
.w-drop { position: absolute; left: 66px; top: 208px; width: 386px; height: 29px; border: 1px dashed #2be02b; border-top: 2px solid #3fc43f; }
.w-drop .arrow { position: absolute; right: 0; top: 0; width: 22px; height: 26px; background: linear-gradient(#f6f6f6 50%, #e2e2e2 50%); display: grid; place-items: center; }
.arrow::after { content: ""; border: 6px solid transparent; border-top: 6px solid #777; border-bottom: 0; }
.h { position: absolute; width: 9px; height: 9px; border: 2px solid #333; background: #fff; }
.nw, .w, .sw { left: -5px; }
.n, .s { left: 188px; }
.ne, .e, .se { right: -5px; }
.nw, .n, .ne { top: -5px; }
.w, .e { top: 9px; }
.sw, .s, .se { bottom: -5px; }
.w-list { position: absolute; left: 66px; top: 283px; width: 386px; height: 219px; border: 1px solid #b8b8b8; border-top: 2px solid #888; display: flex; justify-content: flex-end; }
.w-bar { width: 22px; background: #f4f4f4; border-left: 1px solid #e4e4e4; display: flex; flex-direction: column; align-items: center; justify-content: space-between; padding: 9px 0 6px; }
.w-bar .up { border: 6px solid transparent; border-top: 0; border-bottom-color: #777; }
.w-bar .down { border: 6px solid transparent; border-bottom: 0; border-top-color: #777; }

.right { flex: none; width: 358px; display: flex; flex-direction: column; border-left: 2px solid #b4b4b4; background: #f3f3f3; }
.right .phead { padding-right: 10px; font-size: 14px; }
.wname { flex: none; height: 51px; padding: 0 12px; background: #fff; border-top: 1px solid #c4c4c4; font-size: 22px; font-style: italic; }
.wname::placeholder { color: #777; opacity: 1; }
.itabs { flex: none; height: 34px; display: flex; background: #d6d6d6; font-size: 14px; color: #222; }
.itabs button { flex: 1; padding-top: 2px; }
.itabs .cur { background: #1c9fdc; color: #e8f6fd; }
.ibody { flex: 1; min-height: 0; display: flex; }
.props { flex: 1; overflow: hidden; margin-right: 5px; color: #222; }
.props > section { display: flex; align-items: flex-start; gap: 14px; padding: 10px 13px 10px 15px; line-height: 25px; border-bottom: 1px solid #c8c8c8; }
.props > section > :first-child { margin-right: auto; }
.props > .general { display: block; height: 155px; padding-top: 14px; line-height: 20px; }
.hide { display: flex; justify-content: flex-end; align-items: center; gap: 8px; margin-bottom: 19px; }
input[type="checkbox"] { appearance: none; width: 17px; height: 17px; border: 1px solid #888; background: linear-gradient(135deg, #c9cdd2, #f6f6f6); box-shadow: inset 0 0 0 2px #eee; }
.geo { display: grid; grid-template-columns: 59px 13px 59px 27px 59px 13px 59px; justify-content: end; justify-items: center; align-items: center; }
.geo input { width: 100%; height: 26px; padding-left: 3px; border: 1px solid #b8b8b8; background: #fff; }
.geo svg { width: 16px; height: 12px; }
.dimmed { margin-top: 6px; color: #777; }
.dimmed input, .fadein { background: #d8d8d8; border: 1px solid #c2c2c2; }
.props > .stylepick { height: 52px; background: #fff; align-items: center; justify-content: flex-end; padding-right: 4px; }
.props > .stylepick > .tri { margin: 0; }
.props .dd, .fadein { width: 48px; height: 26px; margin-bottom: -1px; }
.fadein.op { width: 39px; }
.pct { display: flex; gap: 6px; padding-right: 1px; font-size: 14px; }
.ctl { width: 208px; display: flex; flex-direction: column; gap: 11px; }
.ctl > div { display: flex; justify-content: flex-end; gap: 14px; line-height: 20px; }
.grow { flex: 1; }
.props .sel { line-height: 20px; }

.dialog { position: absolute; left: 865px; top: 272px; width: 390px; border: 1px solid #3a97dd; background: #f3f3f3; box-shadow: 0 4px 16px rgba(0, 0, 0, .4); color: #222; font-size: 15px; }
.dhead { height: 39px; display: flex; align-items: center; gap: 4px; padding: 0 15px 0 9px; background: #fff; font-size: 16px; }
.dhead button { margin-left: auto; }
.dialog p { padding: 12px 12px 9px; }
.dtools { display: flex; align-items: center; gap: 15px; padding-left: 20px; }
.dtools .many { width: 94px; height: 28px; margin-left: -12px; border: 1px solid #b4b4b4; font-size: 14px; }
.opts { margin: 7px 13px 0 12px; height: 298px; padding-top: 3px; border: 1px solid #b4b4b4; background: #fff; }
.opts li { height: 28px; padding: 0 5px 0 7px; display: flex; align-items: center; gap: 8px; }
.opts label { display: flex; align-items: center; gap: 9px; }
.opts .edit { background: #c9eaf7; }
.edit input[type="text"] { flex: 1; height: 21px; background: #fff; color: #1d4f7c; }
.edit input::selection { background: #a6d2f7; color: #1d4f7c; }
.dfoot { display: flex; justify-content: flex-end; gap: 6px; padding: 21px 12px 8px; font-size: 16px; }
.dfoot button { width: 97px; height: 28px; border: 1px solid #777; border-radius: 3px; background: linear-gradient(#f4f4f4 50%, #dcdcdc 50%, #d0d0d0); box-shadow: inset 0 0 0 1px #f6f6f6; }
.dfoot .ok { border-color: #2a85b0; background: linear-gradient(#e6f4fc 50%, #c4e5f8 50%, #b0daf2); box-shadow: inset 0 0 0 2px #45c4ee; }
```
